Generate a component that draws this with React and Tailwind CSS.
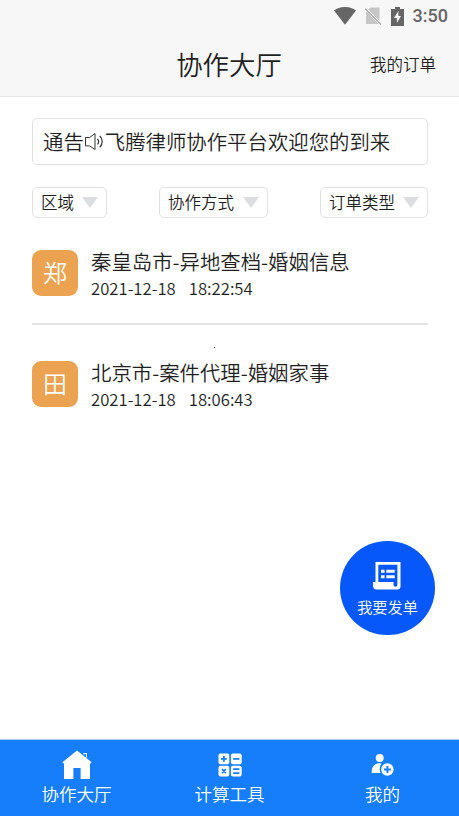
import React from 'react';

const filters = [
  { label: '区域', width: 'w-[75px]' },
  { label: '协作方式', width: 'w-[109px]' },
  { label: '订单类型', width: 'w-[108px]' },
];

const orders = [
  { avatar: '郑', title: '秦皇岛市-异地查档-婚姻信息', date: '2021-12-18', time: '18:22:54' },
  { avatar: '田', title: '北京市-案件代理-婚姻家事', date: '2021-12-18', time: '18:06:43' },
];

const SpeakerIcon = () => (
  <svg width="21" height="20" viewBox="0 0 21 20" fill="none" stroke="#333" strokeWidth="1">
    <path d="M1.5 5.5h4.2l5.3-4v16l-5.3-3.6H1.5z" />
    <path d="M13.5 6.8c1.3 1.6 1.3 4 0 5.6M15.8 4c3.2 3 3.2 8.2 0 11.2" strokeWidth="1.2" />
  </svg>
);

const OrderIcon = () => (
  <svg width="30" height="30" viewBox="0 0 30 30" fill="#fff">
    <path d="M3.5 1h25v24.2a3.3 3.3 0 0 1-3.3 3.3H4.6A3.7 3.7 0 0 1 1 24.8V21h2.5zM6.3 3.8V21h15.2v2.6c0 1.3.7 2.1 1.9 2.1s2-.7 2-1.9v-20z" fillRule="evenodd" />
    <path d="M9 8.7h3.6v3H9zM14.3 8.7h8.4v3h-8.4zM9 14.2h3.6v3H9zM14.3 14.2h8.4v3h-8.4z" />
  </svg>
);

const HomeIcon = () => (
  <svg width="30" height="30" viewBox="0 0 30 30" fill="#fff">
    <path d="M15 .6L29.6 12.2l-.8 1.2-.8-.5v16.1H18.6v-11h-7.2v11H2V12.9l-.8.5-.8-1.2z" />
    <path d="M21.4 3h3.6v4.6h-1V4.2h-2.6z" />
  </svg>
);

const CalculatorIcon = () => (
  <svg width="24" height="24" viewBox="0 0 24 24">
    <g fill="#fff">
      <rect x="0.5" y="0.5" width="10.8" height="10.8" rx="2" />
      <rect x="12.9" y="0.5" width="10.8" height="10.8" rx="2" />
      <rect x="0.5" y="12.7" width="10.8" height="10.8" rx="2" />
      <rect x="12.9" y="12.7" width="10.8" height="10.8" rx="2" />
    </g>
    <path
      d="M5.9 3v5.8M3 5.9h5.8M15.2 5.9h6.2M4 16.2l3.8 3.8M7.8 16.2L4 20M15.2 16.2h6.2M15.2 20.1h6.2"
      fill="none"
      stroke="#167efb"
      strokeWidth="1.8"
    />
  </svg>
);

const UserIcon = () => (
  <svg width="24" height="24" viewBox="0 0 24 24">
    <circle cx="8.7" cy="4.9" r="4" fill="#fff" />
    <path d="M.7 20v-1.5c0-4.5 3-8 7.2-8.2 1 0 1.8.1 2.7.5-1.8 1.9-2.5 5.7-1 9.2z" fill="#fff" />
    <circle cx="16.4" cy="16.5" r="6.2" fill="#fff" />
    <path d="M16.4 13v7M12.9 16.5h7" stroke="#167efb" strokeWidth="1.9" />
  </svg>
);

const tabs = [
  { label: '协作大厅', icon: HomeIcon },
  { label: '计算工具', icon: CalculatorIcon },
  { label: '我的', icon: UserIcon },
];

const StatusBar = () => (
  <div className="flex h-8 items-center justify-end pr-[11px] text-[#666]">
    <svg className="mr-[9px]" width="22" height="18" viewBox="0 0 22 18" fill="currentColor">
      <path d="M0 3.5C6.5-1.2 15.5-1.2 22 3.5L11 17.8z" />
    </svg>
    <svg className="mr-[9px]" width="17" height="18" viewBox="0 0 17 18">
      <path d="M5.5.5h9V17H1V5z" fill="#c6c6c6" />
      <path d="M0 1l16 16.5" stroke="#f7f7f7" strokeWidth="2.6" />
      <path d="M0 1.5l16 16" stroke="#aaa" strokeWidth="1.3" />
    </svg>
    <svg className="mr-[9px]" width="13" height="19" viewBox="0 0 13 19">
      <path d="M4 0h5v2h4v17H0V2h4z" fill="currentColor" />
      <path d="M7.4 4L3 11h2.9v5L10 9H7.4z" fill="#f7f7f7" />
    </svg>
    <span className="font-[Roboto] text-[18px] font-medium leading-none">3:50</span>
  </div>
);

const App = () => {
  return (
    <div className="relative flex h-[816px] w-[459px] flex-col overflow-hidden bg-white font-['Noto_Sans_CJK_SC',sans-serif] font-[350] text-[#1f1f1f]">
      {/* Header */}
      <header className="h-[97px] shrink-0 border-b border-[#e8e8e8] bg-[#f7f7f7]">
        <StatusBar />
        <div className="grid h-16 grid-cols-[1fr_auto_1fr] items-center pr-[23px]">
          <h1 className="col-start-2 pl-[22px] text-[26.4px] leading-none">协作大厅</h1>
          <span className="justify-self-end text-[16.5px] leading-none">我的订单</span>
        </div>
      </header>

      <main className="flex-1 px-8 pr-[31px] pt-[21px]">
        {/* Notice */}
        <div className="flex h-[47px] items-center rounded-[5px] border border-[#dfe1e3] pl-[10px] text-[20.4px] leading-none">
          <span>通告</span>
          <SpeakerIcon />
          <span>飞腾律师协作平台欢迎您的到来</span>
        </div>

        {/* Filters */}
        <div className="mt-[22px] flex justify-between">
          {filters.map(({ label, width }) => (
            <button
              key={label}
              className={`flex h-[31px] items-center justify-between rounded-[5px] border border-[#dfe1e3] pl-2 pr-[8px] text-[16.5px] leading-none ${width}`}
            >
              {label}
              <svg width="16" height="11" viewBox="0 0 16 11" fill="#dcdde0">
                <path d="M0 0h16L8 11z" />
              </svg>
            </button>
          ))}
        </div>

        {/* Orders */}
        <ul className="mt-8 divide-y-2 divide-[#e4e4e4]">
          {orders.map(({ avatar, title, date, time }) => (
            <li key={title} className="flex h-[75px] gap-[13px] not-first:h-[111px] not-first:pt-9">
              <span className="flex size-[46px] shrink-0 items-center justify-center rounded-[9px] bg-[#eba251] pb-[2px] text-[24px] leading-none text-white">
                {avatar}
              </span>
              <div>
                <p className="text-[20.4px] leading-[22px]">{title}</p>
                <p className="mt-[6px] flex gap-[13px] text-[16.7px] leading-5">
                  <span>{date}</span>
                  <span>{time}</span>
                </p>
              </div>
            </li>
          ))}
        </ul>
      </main>

      <span className="absolute left-[214px] top-[347px] size-px bg-[#333]" />

      {/* Publish button */}
      <button className="absolute left-[340px] top-[541px] flex h-[94px] w-[95px] flex-col items-center rounded-full bg-[#0758fb] pt-5 text-white">
        <span className="pr-[2px]">
          <OrderIcon />
        </span>
        <span className="mt-[8px] text-[15.2px] leading-none">我要发单</span>
      </button>

      {/* Tab bar */}
      <nav className="grid h-[77px] shrink-0 grid-cols-3 border-t border-[#a9cffb] bg-[#167efb] text-white">
        {tabs.map(({ label, icon: Icon }) => (
          <div key={label} className="flex flex-col items-center pt-[10px]">
            <div className="flex h-[30px] items-center">
              <Icon />
            </div>
            <span className="mt-[5px] text-[17.5px] leading-none">{label}</span>
          </div>
        ))}
      </nav>
    </div>
  );
};

export default App;
